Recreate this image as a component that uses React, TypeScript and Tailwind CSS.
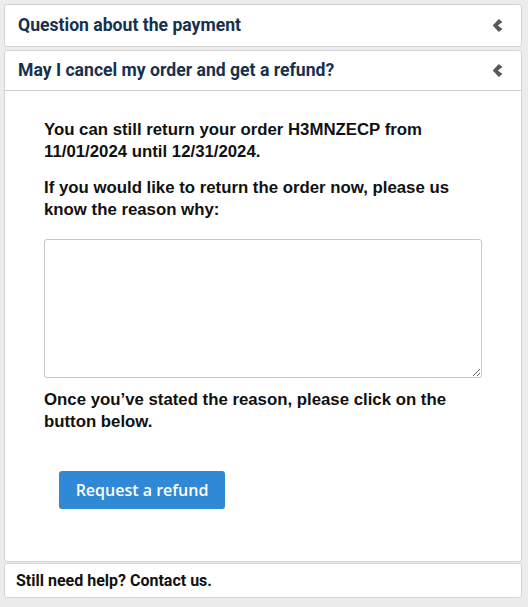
import { useState } from 'react'

function Chevron() {
  // thick chevron-left, like the accordion arrow
  return (
    <svg viewBox="0 0 10 12" className="w-[11px] h-[13px]" aria-hidden>
      <path d="M6.2 0 L9.6 2.7 L5.4 6 L9.6 9.3 L6.2 12 L0.6 6 Z" fill="#5a5a5a" />
    </svg>
  )
}

export default function App() {
  const [reason, setReason] = useState('')

  return (
    <div className="min-h-[607px] bg-[#ececec] pt-[4px] pl-[4px] pr-[6px] pb-[8px] [font-family:Roboto,sans-serif]">
      {/* Closed item */}
      <div className="bg-white border border-[#d4d4d4] rounded-[3px]">
        <div className="flex items-center justify-between h-[41px] pl-[13px] pr-[18px]">
          <span className="text-[17.6px] font-bold text-[#17304d]">Question about the payment</span>
          <Chevron />
        </div>
      </div>

      {/* Open item */}
      <div className="mt-[3px] bg-white border border-[#d4d4d4] rounded-[3px]">
        <div className="flex items-center justify-between h-[40px] pl-[13px] pr-[18px] border-b border-[#cfcfcf]">
          <span className="text-[17.6px] font-bold text-[#17304d]">May I cancel my order and get a refund?</span>
          <Chevron />
        </div>
        <div className="pt-[28px] pb-[52px] pl-[39px] pr-[39px] [font-family:'Liberation_Sans',Arial,sans-serif] font-bold text-[16.8px] leading-[22px] text-[#111]">
          <p>You can still return your order H3MNZECP from 11/01/2024 until 12/31/2024.</p>
          <p className="mt-[14px]">If you would like to return the order now, please us know the reason why:</p>
          <textarea
            value={reason}
            onChange={e => setReason(e.target.value)}
            className="block mt-[18px] w-full h-[139px] border border-[#c8c8c8] rounded-[3px] bg-white outline-none font-normal"
          />
          <p className="mt-[11px]">Once you’ve stated the reason, please click on the button below.</p>
          <button className="mt-[38px] ml-[15px] h-[38px] w-[166px] rounded-[3px] bg-[#2f89d6] text-white text-[16px] font-semibold [font-family:'Open_Sans',sans-serif]">
            Request a refund
          </button>
        </div>
      </div>

      {/* Footer */}
      <div className="mt-[1px] bg-white border border-[#d4d4d4] rounded-[3px] h-[35px] flex items-center pl-[11px]">
        <span className="text-[16px] font-bold text-[#111]">Still need help? Contact us.</span>
      </div>
    </div>
  )
}
